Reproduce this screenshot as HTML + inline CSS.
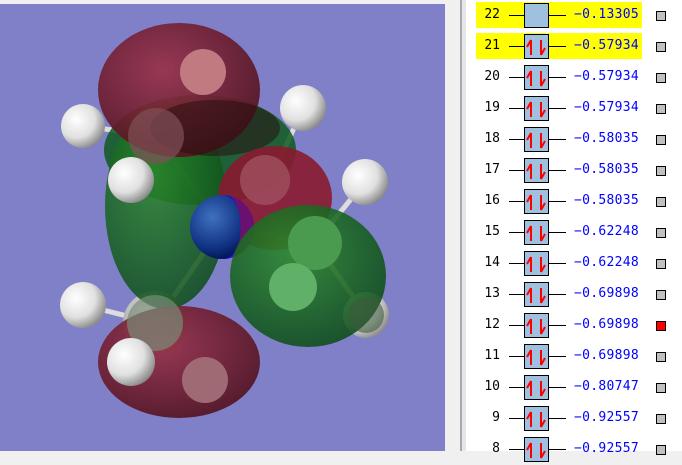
<!DOCTYPE html>
<html><head><meta charset="utf-8"><style>
*{margin:0;padding:0;box-sizing:border-box}
body{width:682px;height:451px;overflow:hidden;background:#f0f0f0;position:relative;font-family:"DejaVu Sans Mono","Liberation Mono",monospace}
#vp{position:absolute;left:0;top:4px;width:445px;height:447px;background:#8080c8;overflow:hidden}
#sep{position:absolute;left:460px;top:0;width:2px;height:451px;background:#a8a8b0}
#sep2{position:absolute;left:462px;top:0;width:4px;height:451px;background:#e6e6e6}
#panel{position:absolute;left:466px;top:0;width:216px;height:451px;background:#fff}
.row{position:absolute;left:0;width:216px;height:26px}
.hl{position:absolute;left:10px;top:0;width:166px;height:26px;background:#ffff00}
.num{position:absolute;left:10px;width:24px;text-align:right;top:5px;font-size:13px;color:#000}
.ln{position:absolute;top:13px;height:1px;background:#000}
.box{position:absolute;left:58px;top:1px;width:25px;height:25px;background:#a0c0e0;border:1px solid #000}
.val{position:absolute;left:108px;top:5px;font-size:13px;color:#0000ff;letter-spacing:0.3px}
.cb{position:absolute;left:190px;top:9px;width:10px;height:10px;background:#c0c0c0;border:1px solid #000}
</style></head><body>
<div id="vp">
<svg width="445" height="447" viewBox="0 4 445 447">
<defs>
<radialGradient id="wh" cx="35%" cy="35%" r="70%"><stop offset="0" stop-color="#fff"/><stop offset=".6" stop-color="#e0e0e0"/><stop offset="1" stop-color="#888"/></radialGradient>
<radialGradient id="gr" cx="35%" cy="35%" r="70%"><stop offset="0" stop-color="#eee"/><stop offset="1" stop-color="#777"/></radialGradient>
<radialGradient id="bl" cx="35%" cy="35%" r="70%"><stop offset="0" stop-color="#4070c0"/><stop offset=".7" stop-color="#103080"/><stop offset="1" stop-color="#001050"/></radialGradient>
<radialGradient id="rd" cx="40%" cy="35%" r="70%"><stop offset="0" stop-color="#9a3048"/><stop offset="1" stop-color="#50101c"/></radialGradient>
<radialGradient id="gn" cx="40%" cy="35%" r="70%"><stop offset="0" stop-color="#2a8a2a"/><stop offset="1" stop-color="#0c4a18"/></radialGradient>
</defs>
<g stroke="#ddd" stroke-width="5">
<line x1="156" y1="136" x2="222" y2="227"/><line x1="155" y1="323" x2="222" y2="227"/>
<line x1="222" y1="227" x2="315" y2="243"/><line x1="83" y1="126" x2="156" y2="136"/>
<line x1="303" y1="108" x2="275" y2="170"/><line x1="365" y1="182" x2="315" y2="243"/>
<line x1="83" y1="305" x2="155" y2="323"/><line x1="366" y1="315" x2="315" y2="243"/>
</g>
<circle cx="83" cy="126" r="22" fill="url(#wh)"/>
<circle cx="83" cy="305" r="23" fill="url(#wh)"/>
<circle cx="156" cy="136" r="32" fill="url(#gr)"/>
<circle cx="155" cy="323" r="32" fill="url(#gr)"/>
<circle cx="366" cy="315" r="23" fill="url(#wh)"/>
<circle cx="365" cy="182" r="23" fill="url(#wh)"/>
<circle cx="303" cy="108" r="23" fill="url(#wh)"/>
<ellipse cx="200" cy="150" rx="96" ry="55" fill="#0e5a1e" opacity=".85"/>
<ellipse cx="166" cy="206" rx="61" ry="103" fill="url(#gn)" opacity=".85"/>
<ellipse cx="179" cy="90" rx="81" ry="67" fill="url(#rd)" opacity=".9"/>
<ellipse cx="215" cy="128" rx="65" ry="28" fill="#2a0e10" opacity=".55"/>
<ellipse cx="179" cy="362" rx="81" ry="56" fill="url(#rd)" opacity=".9"/>
<circle cx="203" cy="72" r="23" fill="#c07a80"/>
<circle cx="205" cy="380" r="23" fill="#a06a74"/>
<circle cx="156" cy="136" r="28" fill="#805058" opacity=".7"/>
<circle cx="155" cy="323" r="28" fill="#788a78" opacity=".7"/>
<circle cx="131" cy="180" r="23" fill="url(#wh)"/>
<circle cx="131" cy="362" r="24" fill="url(#wh)"/>
<ellipse cx="275" cy="198" rx="57" ry="52" fill="#8a1a30" opacity=".9"/>
<circle cx="265" cy="180" r="25" fill="#a05060" opacity=".8"/>
<circle cx="222" cy="227" r="32" fill="url(#bl)"/>
<path d="M222 195 A32 32 0 0 1 222 259 A20 32 0 0 0 222 195Z" fill="#1010ee"/>
<path d="M230 196 A32 32 0 0 1 230 258 A14 32 0 0 0 230 196Z" fill="#6a1070"/>
<ellipse cx="308" cy="276" rx="78" ry="71" fill="url(#gn)" opacity=".88"/>
<circle cx="315" cy="243" r="27" fill="#4a9a50"/>
<circle cx="293" cy="287" r="24" fill="#60b068"/>
<circle cx="366" cy="315" r="18" fill="#3a5a3a" opacity=".6"/>
</svg>
</div>
<div id="sep"></div><div id="sep2"></div>
<div id="panel">
<svg width="0" height="0" style="position:absolute"><defs>
<g id="ar"><path d="M6 20 V5 M6 5 L2 12 M16 5 V20 M16 20 L20 13" stroke="#f00" stroke-width="2" fill="none"/></g></defs></svg>
</div>
<script>
var vals={22:"−0.13305",21:"−0.57934",20:"−0.57934",19:"−0.57934",18:"−0.58035",17:"−0.58035",16:"−0.58035",15:"−0.62248",14:"−0.62248",13:"−0.69898",12:"−0.69898",11:"−0.69898",10:"−0.80747",9:"−0.92557",8:"−0.92557"};
var p=document.getElementById('panel'),h='';
for(var i=22;i>=8;i--){var ty=2+(22-i)*31;
h+='<div class="row" style="top:'+ty+'px">'+(i>=21?'<div class="hl"></div>':'')+
'<div class="num">'+i+'</div><div class="ln" style="left:43px;width:15px"></div><div class="ln" style="left:83px;width:17px"></div>'+
'<div class="box">'+(i<22?'<svg width="23" height="23"><use href="#ar"/></svg>':'')+'</div>'+
'<div class="val">'+vals[i]+'</div><div class="cb"'+(i==12?' style="background:#f00"':'')+'></div></div>';}
p.insertAdjacentHTML('beforeend',h);
</script>
</body></html>
